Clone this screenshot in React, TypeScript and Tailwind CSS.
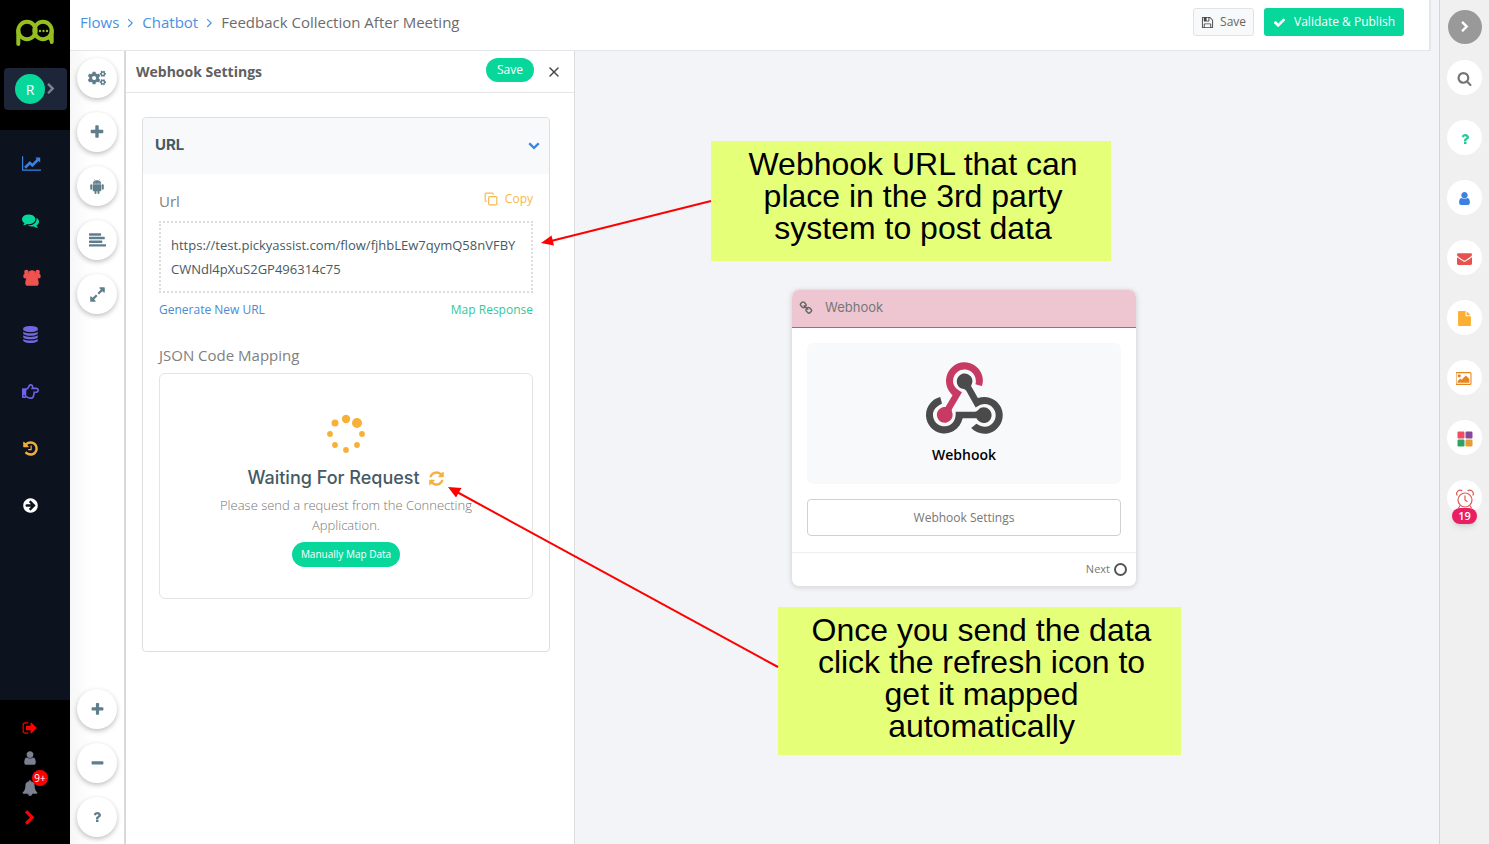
import type { ReactNode } from "react";
import { Copy, X } from "lucide-react";
import { FaCogs, FaRegHandPointRight } from "react-icons/fa";

// Glyph outlines on a 1792 unit grid, some of them are wider
const glyphs = {
  chart: { w: 2048, d: "M2048 1536v128h-2048v-1536h128v1408h1920zm-128-1248v435q0 21-19.5 29.5t-35.5-7.5l-121-121-633 633q-10 10-23 10t-23-10l-233-233-416 416-192-192 585-585q10-10 23-10t23 10l233 233 464-464-121-121q-16-16-7.5-35.5t29.5-19.5h435q14 0 23 9t9 23z" },
  plus: { w: 1792, d: "M1600 736v192q0 40-28 68t-68 28h-416v416q0 40-28 68t-68 28h-192q-40 0-68-28t-28-68v-416h-416q-40 0-68-28t-28-68v-192q0-40 28-68t68-28h416v-416q0-40 28-68t68-28h192q40 0 68 28t28 68v416h416q40 0 68 28t28 68z" },
  minus: { w: 1792, d: "M1600 736v192q0 40-28 68t-68 28h-1216q-40 0-68-28t-28-68v-192q0-40 28-68t68-28h1216q40 0 68 28t28 68z" },
  question: { w: 1792, d: "M1088 1256v240q0 16-12 28t-28 12h-240q-16 0-28-12t-12-28v-240q0-16 12-28t28-12h240q16 0 28 12t12 28zm316-600q0 54-15.5 101t-35 76.5-55 59.5-57.5 43.5-61 35.5q-41 23-68.5 65t-27.5 67q0 17-12 32.5t-28 15.5h-240q-15 0-25.5-18.5t-10.5-37.5v-45q0-83 65-156.5t143-108.5q59-27 84-56t25-76q0-42-46.5-74t-107.5-32q-65 0-108 29-35 25-107 115-13 16-31 16-12 0-25-8l-164-125q-13-10-15.5-25t5.5-28q160-266 464-266 80 0 161 31t146 83 106 127.5 41 158.5z" },
  user: { w: 1792, d: "M1536 1399q0 109-62.5 187t-150.5 78h-854q-88 0-150.5-78t-62.5-187q0-85 8.5-160.5t31.5-152 58.5-131 94-89 134.5-34.5q131 128 313 128t313-128q76 0 134.5 34.5t94 89 58.5 131 31.5 152 8.5 160.5zm-256-887q0 159-112.5 271.5t-271.5 112.5-271.5-112.5-112.5-271.5 112.5-271.5 271.5-112.5 271.5 112.5 112.5 271.5z" },
  alignLeft: { w: 1792, d: "M1792 1344v128q0 26-19 45t-45 19h-1664q-26 0-45-19t-19-45v-128q0-26 19-45t45-19h1664q26 0 45 19t19 45zm-384-384v128q0 26-19 45t-45 19h-1280q-26 0-45-19t-19-45v-128q0-26 19-45t45-19h1280q26 0 45 19t19 45zm256-384v128q0 26-19 45t-45 19h-1536q-26 0-45-19t-19-45v-128q0-26 19-45t45-19h1536q26 0 45 19t19 45zm-384-384v128q0 26-19 45t-45 19h-1152q-26 0-45-19t-19-45v-128q0-26 19-45t45-19h1152q26 0 45 19t19 45z" },
  expand: { w: 1792, d: "M883 1056q0 13-10 23l-332 332 144 144q19 19 19 45t-19 45-45 19h-448q-26 0-45-19t-19-45v-448q0-26 19-45t45-19 45 19l144 144 332-332q10-10 23-10t23 10l114 114q10 10 10 23zm781-864v448q0 26-19 45t-45 19-45-19l-144-144-332 332q-10 10-23 10t-23-10l-114-114q-10-10-10-23t10-23l332-332-144-144q-19-19-19-45t19-45 45-19h448q26 0 45 19t19 45z" },
  refresh: { w: 1792, d: "M1639 1056q0 5-1 7-64 268-268 434.5t-478 166.5q-146 0-282.5-55t-243.5-157l-129 129q-19 19-45 19t-45-19-19-45v-448q0-26 19-45t45-19h448q26 0 45 19t19 45-19 45l-137 137q71 66 161 102t187 36q134 0 250-65t186-179q11-17 53-117 8-23 30-23h192q13 0 22.5 9.5t9.5 22.5zm25-800v448q0 26-19 45t-45 19h-448q-26 0-45-19t-19-45 19-45l138-138q-148-137-349-137-134 0-250 65t-186 179q-11 17-53 117-8 23-30 23h-199q-13 0-22.5-9.5t-9.5-22.5v-7q65-268 270-434.5t480-166.5q146 0 284 55.5t245 156.5l130-129q19-19 45-19t45 19 19 45z" },
  chevronRight: { w: 1792, d: "M1363 877l-742 742q-19 19-45 19t-45-19l-166-166q-19-19-19-45t19-45l531-531-531-531q-19-19-19-45t19-45l166-166q19-19 45-19t45 19l742 742q19 19 19 45t-19 45z" },
  chevronDown: { w: 1792, d: "M1683 808l-742 741q-19 19-45 19t-45-19l-742-741q-19-19-19-45.5t19-45.5l166-165q19-19 45-19t45 19l531 531 531-531q19-19 45-19t45 19l166 165q19 19 19 45.5t-19 45.5z" },
  angleRight: { w: 1792, d: "M1171 960q0 13-10 23l-466 466q-10 10-23 10t-23-10l-50-50q-10-10-10-23t10-23l393-393-393-393q-10-10-10-23t10-23l50-50q10-10 23-10t23 10l466 466q10 10 10 23z" },
  check: { w: 1792, d: "M1671 566q0 40-28 68l-724 724-136 136q-28 28-68 28t-68-28l-136-136-362-362q-28-28-28-68t28-68l136-136q28-28 68-28t68 28l294 295 656-657q28-28 68-28t68 28l136 136q28 28 28 68z" },
  search: { w: 1792, d: "M1216 832q0-185-131.5-316.5t-316.5-131.5-316.5 131.5-131.5 316.5 131.5 316.5 316.5 131.5 316.5-131.5 131.5-316.5zm512 832q0 52-38 90t-90 38q-54 0-90-38l-343-342q-179 124-399 124-143 0-273.5-55.5t-225-150-150-225-55.5-273.5 55.5-273.5 150-225 225-150 273.5-55.5 273.5 55.5 225 150 150 225 55.5 273.5q0 220-124 399l343 343q37 37 37 90z" },
  envelope: { w: 1792, d: "M1792 710v794q0 66-47 113t-113 47h-1472q-66 0-113-47t-47-113v-794q44 49 101 87 362 246 497 345 57 42 92.5 65.5t94.5 48 110 24.5h2q51 0 110-24.5t94.5-48 92.5-65.5q170-123 498-345 57-39 100-87zm0-294q0 79-49 151t-122 123q-376 261-468 325-10 7-42.5 31t-54 38.5-52 32.5-57.5 27-50 9h-2q-23 0-50-9t-57.5-27-52-32.5-54-38.5-42.5-31q-91-64-262-182.5t-205-142.5q-62-42-117-115.5t-55-136.5q0-78 41.5-130t118.5-52h1472q65 0 112.5 47t47.5 113z" },
  picture: { w: 1920, d: "M576 576q0 80-56 136t-136 56-136-56-56-136 56-136 136-56 136 56 56 136zm1024 384v448h-1408v-192l320-320 160 160 512-512zm96-704h-1600q-13 0-22.5 9.5t-9.5 22.5v1216q0 13 9.5 22.5t22.5 9.5h1600q13 0 22.5-9.5t9.5-22.5v-1216q0-13-9.5-22.5t-22.5-9.5zm160 32v1216q0 66-47 113t-113 47h-1600q-66 0-113-47t-47-113v-1216q0-66 47-113t113-47h1600q66 0 113 47t47 113z" },
  database: { w: 1792, d: "M896 768q237 0 443-43t325-127v170q0 69-103 128t-280 93.5-385 34.5-385-34.5-280-93.5-103-128v-170q119 84 325 127t443 43zm0 768q237 0 443-43t325-127v170q0 69-103 128t-280 93.5-385 34.5-385-34.5-280-93.5-103-128v-170q119 84 325 127t443 43zm0-384q237 0 443-43t325-127v170q0 69-103 128t-280 93.5-385 34.5-385-34.5-280-93.5-103-128v-170q119 84 325 127t443 43zm0-1152q208 0 385 34.5t280 93.5 103 128v128q0 69-103 128t-280 93.5-385 34.5-385-34.5-280-93.5-103-128v-128q0-69 103-128t280-93.5 385-34.5z" },
  history: { w: 1792, d: "M1664 896q0 156-61 298t-164 245-245 164-298 61q-172 0-327-72.5t-264-204.5q-7-10-6.5-22.5t8.5-20.5l137-138q10-9 25-9 16 2 23 12 73 95 179 147t225 52q104 0 198.5-40.5t163.5-109.5 109.5-163.5 40.5-198.5-40.5-198.5-109.5-163.5-163.5-109.5-198.5-40.5q-98 0-188 35.5t-160 101.5l137 138q31 30 14 69-17 40-59 40h-448q-26 0-45-19t-19-45v-448q0-42 40-59 39-17 69 14l130 129q107-101 244.5-156.5t284.5-55.5q156 0 298 61t245 164 164 245 61 298zm-640-288v448q0 14-9 23t-23 9h-320q-14 0-23-9t-9-23v-64q0-14 9-23t23-9h224v-352q0-14 9-23t23-9h64q14 0 23 9t9 23z" },
  arrowCircle: { w: 1792, d: "M1413 896q0-27-18-45l-91-91-362-362q-18-18-45-18t-45 18l-91 91q-18 18-18 45t18 45l189 189h-502q-26 0-45 19t-19 45v128q0 26 19 45t45 19h502l-189 189q-19 19-19 45t19 45l91 91q18 18 45 18t45-18l362-362 91-91q18-18 18-45zm251 0q0 209-103 385.5t-279.5 279.5-385.5 103-385.5-103-279.5-279.5-103-385.5 103-385.5 279.5-279.5 385.5-103 385.5 103 279.5 279.5 103 385.5z" },
  signOut: { w: 1792, d: "M704 1440q0 4 1 20t.5 26.5-3 23.5-10 19.5-20.5 6.5h-320q-119 0-203.5-84.5t-84.5-203.5v-704q0-119 84.5-203.5t203.5-84.5h320q13 0 22.5 9.5t9.5 22.5q0 4 1 20t.5 26.5-3 23.5-10 19.5-20.5 6.5h-320q-66 0-113 47t-47 113v704q0 66 47 113t113 47h312l11.5 1 11.5 3 8 5.5 7 9 2 13.5zm928-544q0 26-19 45l-544 544q-19 19-45 19t-45-19-19-45v-288h-448q-26 0-45-19t-19-45v-384q0-26 19-45t45-19h448v-288q0-26 19-45t45-19 45 19l544 544q19 19 19 45z" },
  bell: { w: 1792, d: "M912 1696q0-16-16-16-59 0-101.5-42.5t-42.5-101.5q0-16-16-16t-16 16q0 73 51.5 124.5t124.5 51.5q16 0 16-16zm816-288q0 52-38 90t-90 38h-448q0 106-75 181t-181 75-181-75-75-181h-448q-52 0-90-38t-38-90q50-42 91-88t85-119.5 74.5-158.5 50-206 19.5-260q0-152 117-282.5t307-158.5q-8-19-8-39 0-40 28-68t68-28 68 28 28 68q0 20-8 39 190 28 307 158.5t117 282.5q0 139 19.5 260t50 206 74.5 158.5 85 119.5 91 88z" },
  comments: { w: 1792, d: "M1408 768q0 139-94 257t-256.5 186.5-353.5 68.5q-86 0-176-16-124 88-278 128-36 9-86 16h-3q-11 0-20.5-8t-11.5-21q-1-3-1-6.5t.5-6.5 2-6l2.5-5 3.5-5.5 4-5 4.5-5 4-4.5q5-6 23-25t26-29.5 22.5-29 25-38.5 20.5-44q-124-72-195-177t-71-224q0-139 94-257t256.5-186.5 353.5-68.5 353.5 68.5 256.5 186.5 94 257zm384 256q0 120-71 224.5t-195 176.5q10 24 20.5 44t25 38.5 22.5 29 26 29.5 23 25q1 1 4 4.5t4.5 5 4 5 3.5 5.5l2.5 5 2 6 .5 6.5-1 6.5q-3 14-13 22t-22 7q-50-7-86-16-154-40-278-128-90 16-176 16-271 0-472-132 58 4 88 4 161 0 309-45t264-129q125-92 192-212t67-254q0-77-23-152 129 71 204 178t75 230z" },
  floppy: { w: 1792, d: "M512 1536h768v-384h-768v384zm896 0h128v-896q0-14-10-38.5t-20-34.5l-281-281q-10-10-34-20t-39-10v416q0 40-28 68t-68 28h-576q-40 0-68-28t-28-68v-416h-128v1280h128v-416q0-40 28-68t68-28h832q40 0 68 28t28 68v416zm-384-928v-320q0-13-9.5-22.5t-22.5-9.5h-192q-13 0-22.5 9.5t-9.5 22.5v320q0 13 9.5 22.5t22.5 9.5h192q13 0 22.5-9.5t9.5-22.5zm640 32v928q0 40-28 68t-68 28h-1344q-40 0-68-28t-28-68v-1344q0-40 28-68t68-28h928q40 0 88 20t76 48l280 280q28 28 48 76t20 88z" },
  file: { w: 1792, d: "M1152 512v-472q22 14 36 28l408 408q14 14 28 36h-472zm-128 32q0 40 28 68t68 28h544v1056q0 40-28 68t-68 28h-1344q-40 0-68-28t-28-68v-1600q0-40 28-68t68-28h800v544z" },
  link: { w: 1792, d: "M1520 1216q0-40-28-68l-208-208q-28-28-68-28-42 0-72 32 3 3 19 18.5t21.5 21.5 15 19 13 25.5 3.5 27.5q0 40-28 68t-68 28q-15 0-27.5-3.5t-25.5-13-19-15-21.5-21.5-18.5-19q-33 31-33 73 0 40 28 68l206 207q27 27 68 27 40 0 68-26l147-146q28-28 28-67zm-703-705q0-40-28-68l-206-207q-28-28-68-28-39 0-68 27l-147 146q-28 28-28 67 0 40 28 68l208 208q27 27 68 27 42 0 72-31-3-3-19-18.5t-21.5-21.5-15-19-13-25.5-3.5-27.5q0-40 28-68t68-28q15 0 27.5 3.5t25.5 13 19 15 21.5 21.5 18.5 19q33-31 33-73zm895 705q0 120-85 203l-147 146q-83 83-203 83-121 0-204-85l-206-207q-83-83-83-203 0-123 88-209l-88-88q-86 88-208 88-120 0-204-84l-208-208q-84-84-84-204t85-203l147-146q83-83 203-83 121 0 204 85l206 207q83 83 83 203 0 123-88 209l88 88q86-88 208-88 120 0 204 84l208 208q84 84 84 204z" },
};

type GlyphName = keyof typeof glyphs;

const Glyph = ({ name, className = "" }: { name: GlyphName; className?: string }) => (
  <svg viewBox={`0 0 ${glyphs[name].w} 1792`} fill="currentColor" className={`w-auto shrink-0 ${className}`} aria-hidden="true">
    <path d={glyphs[name].d} />
  </svg>
);

const Logo = () => (
  <svg viewBox="0 0 38 28" fill="none" stroke="#95bf1f" className="h-7 w-[38px]" aria-hidden="true">
    <g strokeWidth="4" strokeLinecap="round">
      <circle cx="11" cy="11.5" r="8.7" />
      <circle cx="27" cy="11.5" r="8.7" />
      <path d="M2.300 11.500V25M35.700 11.500V23" />
    </g>
    <path d="M29 17l5 5 1-3z" fill="#95bf1f" stroke="none" />
    <g fill="#95bf1f" stroke="none">
      <circle cx="24" cy="12" r="1.200" />
      <circle cx="27.500" cy="12" r="1.200" />
      <circle cx="31" cy="12" r="1.200" />
    </g>
  </svg>
);

const GroupIcon = () => (
  <svg viewBox="0 0 18 17" fill="currentColor" className="ml-px h-[17px] w-[18px]" aria-hidden="true">
    <circle cx="3.400" cy="3" r="2.300" />
    <circle cx="14.600" cy="3" r="2.300" />
    <circle cx="9" cy="5" r="3.700" />
    <path d="M0.300 7.500C0.300 5.500 1.200 4.600 2.200 4.600h13.600c1 0 1.900.9 1.900 2.900 0 1.300-.8 2-2 2h-1.200c.9 1.400 1.200 3 1.200 4.900 0 1.500-.9 2.400-2.400 2.400H4.700c-1.500 0-2.400-.9-2.400-2.400 0-1.900.3-3.500 1.200-4.900H2.300c-1.200 0-2-.7-2-2z" />
  </svg>
);

const AndroidIcon = () => (
  <svg viewBox="0 0 28 30" fill="currentColor" className="h-[15px] w-[14px]" aria-hidden="true">
    <path d="M8.500 0.500l1.600 2.800M19.500 0.500l-1.600 2.800" stroke="currentColor" strokeWidth="1" />
    <path fillRule="evenodd" d="M5.500 9.500C5.500 5 9 2.500 14 2.500s8.500 2.500 8.500 7zM10.200 5.300a.9.9 0 1 0 0 1.800.9.9 0 0 0 0-1.800zm7.600 0a.9.9 0 1 0 0 1.800.9.9 0 0 0 0-1.800z" />
    <path d="M5.500 10.500h17v12a2 2 0 0 1-2 2H19V28a2 2 0 0 1-4 0v-3.500h-2V28a2 2 0 0 1-4 0v-3.500H7.500a2 2 0 0 1-2-2z" />
    <rect x="0.500" y="10.300" width="4" height="11" rx="2" />
    <rect x="23.500" y="10.300" width="4" height="11" rx="2" />
  </svg>
);

const AlarmIcon = () => (
  <svg viewBox="0 0 18 20" fill="none" stroke="#dd5a55" className="mt-0.5 h-5 w-[18px]" aria-hidden="true">
    <circle cx="9" cy="11" r="7" strokeWidth="1.200" />
    <path d="M9 6.500V11l2.500 1.800M1.300 6.500A3.400 3.400 0 0 1 6.300 2M16.700 6.500A3.400 3.400 0 0 0 11.700 2M4.200 16.500L2.500 19M13.800 16.500l1.700 2.500" strokeWidth="1.200" />
  </svg>
);

const AppsIcon = () => (
  <svg viewBox="0 0 16 16" className="h-4 w-4" aria-hidden="true">
    <rect x="0.500" y="0.500" width="7" height="7" rx="1.200" fill="#ec4f63" />
    <rect x="8.500" y="0.500" width="7" height="7" rx="1.200" fill="#844a95" />
    <rect x="0.500" y="8.500" width="7" height="7" rx="1.200" fill="#30a065" />
    <rect x="8.500" y="8.500" width="7" height="7" rx="1.200" fill="#e79c33" />
  </svg>
);

const WebhookLogo = () => (
  <svg viewBox="0 0 256 239" className="h-[72px] w-[77px]" aria-hidden="true">
    <path fill="#C73A63" d="M119.540 100.503C108.930 118.339 98.765 135.611 88.388 152.754c-2.665 4.400-3.984 7.984-1.855 13.579 5.878 15.454-2.414 30.493-17.998 34.575-14.697 3.851-29.016-5.808-31.932-21.543-2.584-13.928 8.224-27.580 23.579-29.757 1.287-.184 2.600-.205 4.763-.367 7.524-12.617 15.232-25.541 23.358-39.168C73.612 95.465 64.868 78.389 66.803 57.229c1.368-14.957 7.250-27.883 18-38.477 20.590-20.288 52.002-23.573 76.246-8.001 23.284 14.958 33.948 44.094 24.858 69.031-6.854-1.858-13.756-3.732-21.343-5.790 2.855-13.865.743-26.315-8.608-36.981-6.178-7.042-14.106-10.733-23.121-12.093-18.071-2.730-35.814 8.880-41.079 26.618-5.976 20.131 3.068 36.575 27.784 48.967z" />
    <path fill="#4B4B4B" d="M149.841 79.411c7.475 13.186 15.065 26.572 22.587 39.835 38.021-11.763 66.687 9.284 76.971 31.817 12.421 27.219 3.930 59.457-20.466 76.249-25.040 17.239-56.707 14.294-78.892-7.850 5.654-4.733 11.336-9.487 17.407-14.566 21.913 14.192 41.077 13.524 55.305-3.282 12.133-14.337 11.870-35.714-.615-49.750-14.408-16.197-33.707-16.691-57.035-1.143-9.677-17.168-19.522-34.199-28.893-51.491-3.159-5.828-6.648-9.209-13.769-10.442-11.893-2.062-19.572-12.275-20.033-23.717-.453-11.316 6.214-21.545 16.634-25.531 10.322-3.948 22.435-.761 29.378 8.015 5.674 7.170 7.477 15.240 4.492 24.083-.83 2.465-1.906 4.852-3.071 7.773z" />
    <path fill="#4A4A4A" d="M167.707 187.210h-45.771c-4.386 18.044-13.862 32.612-30.190 41.876-12.692 7.200-26.372 9.641-40.932 7.291C24.006 232.053 2.086 207.920.156 180.745c-2.184-30.783 18.975-58.146 47.178-64.292 1.947 7.071 3.914 14.210 5.862 21.264-25.876 13.202-34.832 29.836-27.590 50.636 6.375 18.304 24.484 28.337 44.147 24.457 20.080-3.962 30.204-20.650 28.968-47.432 19.036 0 38.088-.197 57.126.097 7.433.117 13.173-.654 18.773-7.208 9.221-10.784 26.191-9.811 36.121.374 10.148 10.409 9.662 27.157-1.077 37.127-10.361 9.620-26.731 9.106-36.424-1.259-1.992-2.137-3.562-4.674-5.533-7.299z" />
  </svg>
);

// Ring of dots, the leading ones are larger
const dots = [
  { x: 19, y: 4, r: 4.2 },
  { x: 30, y: 8, r: 5 },
  { x: 35, y: 19, r: 2.9 },
  { x: 30, y: 30, r: 2.9 },
  { x: 19, y: 35, r: 2.9 },
  { x: 8, y: 30, r: 2.9 },
  { x: 3, y: 19, r: 2.9 },
  { x: 8, y: 8, r: 3.5 },
];

const Spinner = () => (
  <svg viewBox="-1 -1 40 40" className="h-10 w-10" fill="#f7b13a" role="img" aria-label="Waiting">
    {dots.map((dot) => (
      <circle key={`${dot.x}-${dot.y}`} cx={dot.x} cy={dot.y} r={dot.r} />
    ))}
  </svg>
);

const navItems: { label: string; color: string; icon: ReactNode }[] = [
  { label: "Reports", color: "text-[#3b82e0]", icon: <Glyph name="chart" className="h-[17px]" /> },
  { label: "Chats", color: "text-[#08d79c]", icon: <Glyph name="comments" className="h-[17px]" /> },
  { label: "Contacts", color: "text-[#ef5350]", icon: <GroupIcon /> },
  { label: "Data", color: "text-[#7367e0]", icon: <Glyph name="database" className="h-[17px]" /> },
  { label: "Actions", color: "text-[#7460ee]", icon: <FaRegHandPointRight className="h-[17px] w-[17px]" /> },
  { label: "History", color: "text-[#f5ad3a]", icon: <Glyph name="history" className="h-[17px]" /> },
  { label: "More", color: "text-white", icon: <Glyph name="arrowCircle" className="h-[17px]" /> },
];

const Sidebar = () => (
  <nav className="flex w-[70px] shrink-0 flex-col bg-[#0c131e]" aria-label="Main">
    <div className="flex h-[130px] flex-col bg-black pt-[19px]">
      <a href="#home" aria-label="Home" className="mx-4">
        <Logo />
      </a>
      <button className="ml-1 mr-[3px] mt-[21px] flex h-[42px] items-center rounded bg-[#1d2539] pl-[11px]">
        <span className="flex h-[30px] w-[30px] items-center justify-center rounded-full bg-[#08d79c] text-[14px] text-white">R</span>
        <Glyph name="chevronRight" className="h-3 text-[#7d8494]" />
      </button>
    </div>
    <div className="flex flex-col gap-10 pl-[22px] pt-[25px]">
      {navItems.map((item) => (
        <button key={item.label} aria-label={item.label} className={`flex h-[17px] items-center ${item.color}`}>
          {item.icon}
        </button>
      ))}
    </div>
    <div className="mt-auto flex h-36 flex-col gap-3.5 bg-black pl-[22px] pt-5">
      <button aria-label="Sign out" className="flex h-4 items-center text-[#f00]">
        <Glyph name="signOut" className="h-4" />
      </button>
      <button aria-label="Profile" className="flex h-4 items-center text-[#7b8190]">
        <Glyph name="user" className="h-4" />
      </button>
      <button aria-label="Notifications" className="relative flex h-4 items-center text-[#7b8190]">
        <Glyph name="bell" className="h-4" />
        <span className="absolute -top-2.5 left-2.5 flex h-4 w-4 items-center justify-center rounded-full bg-[#f00] text-[10px] text-white">9+</span>
      </button>
      <button aria-label="Expand" className="flex h-4 items-center text-[#f00]">
        <Glyph name="chevronRight" className="h-4" />
      </button>
    </div>
  </nav>
);

const RoundButton = ({ label, children }: { label: string; children: ReactNode }) => (
  <button
    aria-label={label}
    className="flex h-10 w-10 items-center justify-center rounded-full bg-white text-[#607d8b] shadow-[0_2px_5px_rgba(0,0,0,0.25)]"
  >
    {children}
  </button>
);

const Toolbar = () => (
  <div className="flex w-[56px] shrink-0 flex-col items-center gap-[14px] border-r-2 border-[#d9d9d9] bg-gradient-to-r from-[#f7f7f7] to-white to-40% py-[7px]">
    <RoundButton label="Settings"><FaCogs className="h-[18px] w-[18px]" /></RoundButton>
    <RoundButton label="Add"><Glyph name="plus" className="h-4" /></RoundButton>
    <RoundButton label="Android"><AndroidIcon /></RoundButton>
    <RoundButton label="Align"><Glyph name="alignLeft" className="h-[17px]" /></RoundButton>
    <RoundButton label="Expand canvas"><Glyph name="expand" className="h-[17px]" /></RoundButton>
    <div className="mt-auto flex flex-col gap-[14px]">
      <RoundButton label="Zoom in"><Glyph name="plus" className="h-[15px]" /></RoundButton>
      <RoundButton label="Zoom out"><Glyph name="minus" className="h-[15px]" /></RoundButton>
      <RoundButton label="Help"><Glyph name="question" className="h-[14px]" /></RoundButton>
    </div>
  </div>
);

const Header = () => (
  <header className="mr-2 flex h-[51px] shrink-0 items-center justify-between border-b border-r-2 border-[#e4e6ea] bg-white pb-1.5 pl-2.5 pr-[25px]">
    <nav aria-label="Breadcrumb" className="flex items-center text-[15px] text-[#6c6c6c]">
      <a href="#flows" className="text-[#4a90e2]">Flows</a>
      <Glyph name="angleRight" className="mx-1 h-[15px] text-[#4a90e2]" />
      <a href="#chatbot" className="text-[#4a90e2]">Chatbot</a>
      <Glyph name="angleRight" className="mx-1 h-[15px] text-[#4a90e2]" />
      <span>Feedback Collection After Meeting</span>
    </nav>
    <div className="flex gap-2.5 text-[12px]">
      <button className="flex h-7 items-center gap-1.5 rounded-[3px] border border-[#e0e3e6] bg-[#f8f9fa] px-[7px] text-[#666]">
        <Glyph name="floppy" className="h-[13px] text-[#444]" />
        Save
      </button>
      <button className="flex h-7 items-center gap-2 rounded-[3px] bg-[#08d79c] px-[9px] text-white">
        <Glyph name="check" className="h-[13px]" />
        Validate &amp; Publish
      </button>
    </div>
  </header>
);

const SettingsPanel = () => (
  <aside className="flex w-[449px] shrink-0 flex-col border-r border-[#dadce0] bg-white">
    <div className="flex h-[42px] items-center border-b border-[#e6e6e6] pl-2.5 pr-3">
      <h1 className="text-[14px] font-bold text-[#606060]">Webhook Settings</h1>
      <button className="mb-1 ml-auto h-6 rounded-full bg-[#08d79c] px-[11px] text-[12px] text-white">Save</button>
      <button aria-label="Close" className="ml-3 text-[#444]">
        <X className="h-4 w-4" strokeWidth={2} />
      </button>
    </div>
    <section className="mx-6 ml-4 mt-6 rounded border border-[#dcdee0] pb-[52px]">
      <button className="flex h-14 w-full items-center justify-between rounded-t bg-[#f7f9fb] pb-0.5 pl-3 pr-[9px]">
        <span className="font-['Inter',sans-serif] text-[15px] font-bold leading-5 text-[#455a64]">URL</span>
        <Glyph name="chevronDown" className="h-3 text-[#3f87dd]" />
      </button>
      <div className="px-4 pt-[17px]">
        <div className="flex h-[30px] justify-between">
          <label htmlFor="url" className="text-[15px] leading-5 text-[#808080]">Url</label>
          <button className="flex h-4 items-center gap-[7px] text-[12px] text-[#f7b84a]">
            <Copy className="h-[14px] w-[14px]" />
            Copy
          </button>
        </div>
        <textarea
          id="url"
          readOnly
          rows={2}
          className="block h-[72px] w-full resize-none overflow-hidden break-all border-2 border-dotted border-[#dcdcdc] px-2.5 py-2.5 text-[13px] leading-6 text-[#455a64] outline-none"
          value="https://test.pickyassist.com/flow/fjhbLEw7qymQ58nVFBYCWNdl4pXuS2GP496314c75"
        />
        <div className="mt-[9px] flex justify-between text-[12px] leading-4">
          <a href="#generate" className="text-[#4a8bd0]">Generate New URL</a>
          <a href="#map" className="text-[#35c79a]">Map Response</a>
        </div>
        <h2 className="mt-[27px] text-[15px] leading-5 text-[#808080]">JSON Code Mapping</h2>
        <div className="mt-2 flex h-[226px] flex-col items-center rounded-md border border-[#e4e4e4] px-12 pt-10 text-center">
          <Spinner />
          <div className="mt-3 flex items-center gap-2">
            <h3 className="font-['Inter',sans-serif] text-[18px] font-medium leading-6 text-[#455a64]">Waiting For Request</h3>
            <button aria-label="Refresh" className="text-[#f4b13d]">
              <Glyph name="refresh" className="h-[17px]" />
            </button>
          </div>
          <p className="mt-[5px] text-[13px] font-light leading-5 text-[#777]">Please send a request from the Connecting Application.</p>
          <button className="mt-[7px] h-[25px] rounded-full bg-[#08d79c] px-[9px] text-[10px] text-white">Manually Map Data</button>
        </div>
      </div>
    </section>
  </aside>
);

const WebhookNode = () => (
  <article className="absolute left-[216px] top-[238px] w-[346px] overflow-hidden rounded-lg border border-[#e2e2e6] bg-white shadow-[0_1px_5px_rgba(0,0,0,0.12)]">
    <header className="flex h-[38px] items-center gap-3 border-b border-[#c7587b] bg-[#eec6d1] pb-px pl-[7px] text-[#666]">
      <Glyph name="link" className="h-[14px]" />
      <span className="font-['Inter',sans-serif] text-[13px] text-[#777]">Webhook</span>
    </header>
    <div className="flex flex-col gap-[15px] px-[15px] pb-4 pt-[15px]">
      <div className="flex h-[141px] flex-col items-center rounded-md bg-[#f7f9fb] pt-[19px]">
        <WebhookLogo />
        <span className="mt-[11px] text-[14px] font-semibold leading-5 text-black">Webhook</span>
      </div>
      <button className="h-[37px] rounded border border-[#d0d0d0] text-[12px] text-[#777]">Webhook Settings</button>
    </div>
    <footer className="flex h-[34px] items-center justify-end gap-1 border-t border-[#eee] pr-[9px] text-[11px] text-[#777]">
      Next
      <span className="h-[13px] w-[13px] rounded-full border-2 border-[#555]" />
    </footer>
  </article>
);

const noteText = "bg-[#e6ff78] pl-[30px] pr-[26px] pt-[7px] text-center font-['Liberation_Sans',Arial,sans-serif] text-[32px] leading-8 text-black";

const Canvas = () => (
  <main className="relative min-w-0 flex-1 bg-[#f3f4f8]">
    <WebhookNode />
    <p className={`absolute left-[136px] top-[90px] h-[120px] w-[400px] ${noteText}`}>
      Webhook URL that can place in the 3rd party system to post data
    </p>
    <p className={`absolute left-[203px] top-[556px] h-[148px] w-[403px] ${noteText}`}>
      Once you send the data click the refresh icon to get it mapped automatically
    </p>
    {/* Arrows from the notes to the settings panel */}
    <svg viewBox="0 0 340 480" fill="#f00" stroke="#f00" strokeWidth="2" className="pointer-events-none absolute -left-[135px] top-[144px] h-[480px] w-[340px]" aria-hidden="true">
      <path d="M271 6L111 46" />
      <path d="M101 48l10.500-7.500 2.500 10z" stroke="none" />
      <path d="M338 472L17 297" />
      <path d="M8 292l13.500 1-5.500 9.500z" stroke="none" />
    </svg>
  </main>
);

const shortcuts: { label: string; color: string; icon: ReactNode }[] = [
  { label: "Search", color: "text-[#757575]", icon: <Glyph name="search" className="h-[15px]" /> },
  { label: "Help", color: "text-[#26c99a]", icon: <Glyph name="question" className="h-[14px]" /> },
  { label: "Contact", color: "text-[#3b82e0]", icon: <Glyph name="user" className="h-[15px]" /> },
  { label: "Mail", color: "text-[#e5534f]", icon: <Glyph name="envelope" className="h-[15px]" /> },
  { label: "Files", color: "text-[#fbb033]", icon: <Glyph name="file" className="h-[15px]" /> },
  { label: "Media", color: "text-[#e5851f]", icon: <Glyph name="picture" className="h-[15px]" /> },
  { label: "Apps", color: "", icon: <AppsIcon /> },
];

const Shortcuts = () => (
  <aside className="flex w-[50px] shrink-0 flex-col items-center gap-[25px] border-l border-[#d3d3d8] bg-[#f0f0f0] pt-2.5">
    <button aria-label="Collapse" className="-mb-[9px] flex h-[34px] w-[34px] items-center justify-center rounded-full bg-[#999] text-white">
      <Glyph name="chevronRight" className="h-3" />
    </button>
    {shortcuts.map((item) => (
      <button key={item.label} aria-label={item.label} className={`flex h-[35px] w-[35px] items-center justify-center rounded-full bg-white pt-0.5 ${item.color}`}>
        {item.icon}
      </button>
    ))}
    <button aria-label="Reminders" className="relative flex h-[35px] w-[35px] items-center justify-center rounded-full bg-white">
      <AlarmIcon />
      <span className="absolute left-[5px] top-7 flex h-4 w-[25px] items-center justify-center rounded-full bg-[#e91e63] text-[11px] font-semibold text-white shadow-md">19</span>
    </button>
  </aside>
);

export default function App() {
  return (
    <div className="flex h-screen min-h-[700px] overflow-hidden bg-[#f3f4f8] font-['Open_Sans',sans-serif]">
      <Sidebar />
      <div className="flex min-w-0 flex-1 flex-col">
        <Header />
        <div className="flex min-h-0 flex-1">
          <Toolbar />
          <SettingsPanel />
          <Canvas />
        </div>
      </div>
      <Shortcuts />
    </div>
  );
}
